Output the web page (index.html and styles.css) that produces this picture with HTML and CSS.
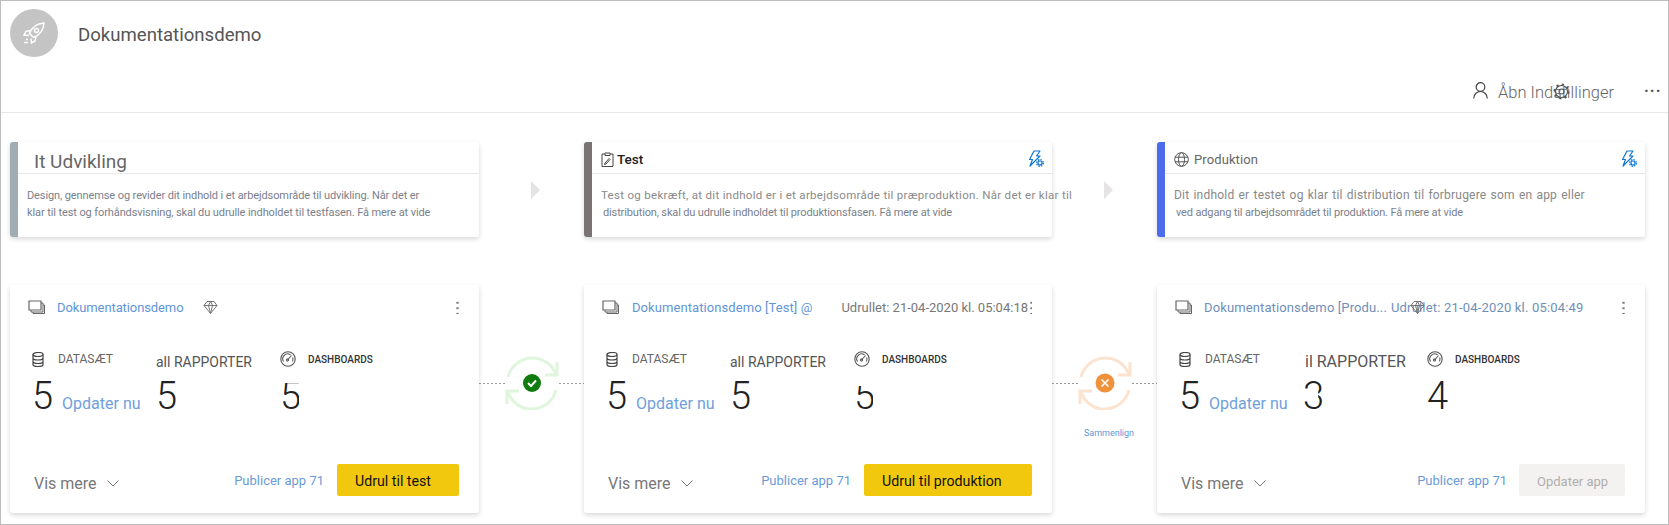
FILE: index.html
```html
<!DOCTYPE html>
<html lang="da">
<head>
    <meta charset="UTF-8">
    <title>Dokumentationsdemo</title>
    <link rel="stylesheet" href="styles.css">
</head>
<body>
    <svg class="sprites" aria-hidden="true">
        <symbol id="i-bolt" viewBox="0 0 16 18">
            <path d="M6 1h6L8.500 6H12L2 16l2.500-6.500H1.500z" fill="none" stroke="currentColor" stroke-width="1.200" stroke-linejoin="round"/>
            <circle cx="12" cy="13" r="2" fill="none" stroke="currentColor" stroke-width="1.200"/>
            <circle cx="12" cy="13" r="3.300" fill="none" stroke="currentColor" stroke-width="1.300" stroke-dasharray="1.500 1.100"/>
        </symbol>
        <symbol id="i-stack" viewBox="0 0 17 14">
            <path d="M1 1h12v9H1z" fill="none" stroke="currentColor" stroke-width="1.200"/>
            <path d="M13 3h2v9H3v-2M15 5h1.500v8.500H5V12" fill="none" stroke="currentColor" stroke-width="1"/>
        </symbol>
        <symbol id="i-db" viewBox="0 0 12 15">
            <ellipse cx="6" cy="2.500" rx="5" ry="2" fill="none" stroke="currentColor" stroke-width="1.200"/>
            <path d="M1 2.500v10c0 1.100 2.200 2 5 2s5-.9 5-2v-10M1 6c0 1.100 2.200 2 5 2s5-.9 5-2M1 9.500c0 1.100 2.200 2 5 2s5-.9 5-2" fill="none" stroke="currentColor" stroke-width="1.200"/>
        </symbol>
        <symbol id="i-gauge" viewBox="0 0 16 16">
            <circle cx="8" cy="8" r="7.200" fill="none" stroke="currentColor" stroke-width="1.100"/>
            <path d="M3.500 10.500A5 5 0 0 1 10.500 3.700" fill="none" stroke="currentColor" stroke-width="1.100"/>
            <path d="M7 9.500L11.500 4.500M12.700 6.500A5 5 0 0 1 12.500 10.500" fill="none" stroke="currentColor" stroke-width="1.100"/>
            <circle cx="7.500" cy="9" r="1.200" fill="none" stroke="currentColor"/>
        </symbol>
        <symbol id="i-diamond" viewBox="0 0 15 15">
            <path d="M4 1.500h7l3 4-6.500 8-6.500-8zM1 5.500h13M5.500 5.500l2 8 2-8L7.500 1.500z" fill="none" stroke="currentColor" stroke-width="1"/>
        </symbol>
        <symbol id="i-chevron" viewBox="0 0 12 7">
            <path d="M.5 .5L6 6l5.500-5.500" fill="none" stroke="currentColor" stroke-width="1"/>
        </symbol>
    </svg>

    <div class="page">
        <header class="top-bar">
            <div class="workspace">
                <div class="avatar">
                    <svg width="24" height="22" viewBox="0 0 24 22" fill="none" stroke="#fff" stroke-width="1.500">
                        <path d="M22 1C15 1.500 10 5 7.500 11.500l4 4C18 13 21.500 8 22 1z"/>
                        <circle cx="14.500" cy="8.500" r="2"/>
                        <path d="M8.500 8.500L4 9.500 2 13l5 .5M14 14.500l-1 4.500-3.500 2-.5-4.500M2 20.500h4M4 17.500h2"/>
                    </svg>
                </div>
                <h1 class="workspace-name">Dokumentationsdemo</h1>
            </div>
            <div class="toolbar">
                <svg class="person" width="15" height="17" viewBox="0 0 15 17" fill="none" stroke="#444" stroke-width="1.200">
                    <circle cx="7.500" cy="5" r="4.300"/>
                    <path d="M.7 16.500c0-4 3-7 6.800-7s6.800 3 6.800 7"/>
                </svg>
                <span class="toolbar-text">Åbn Indstillinger
                    <svg class="gear" width="17" height="17" viewBox="0 0 17 17" fill="none" stroke="#555">
                        <circle cx="8.500" cy="8.500" r="6" stroke-width="1.100"/>
                        <circle cx="8.500" cy="8.500" r="7" stroke-width="2" stroke-dasharray="2.200 3.300"/>
                        <circle cx="8.500" cy="8.500" r="2.500" stroke-width="1.100"/>
                    </svg>
                </span>
                <span class="more">···</span>
            </div>
        </header>

        <main class="pipeline">
            <section class="stage stage-dev">
                <div class="stage-head">
                    <span class="stage-title-big">It Udvikling</span>
                </div>
                <div class="stage-body">
                    <p class="line">Design, gennemse og revider dit indhold i et arbejdsområde til udvikling. Når det er</p>
                    <p class="line">klar til test og forhåndsvisning, skal du udrulle indholdet til testfasen. Få mere at vide</p>
                </div>
            </section>
            <div class="stage-arrow"></div>
            <section class="stage stage-test">
                <div class="stage-head">
                    <svg class="stage-icon" width="13" height="15" viewBox="0 0 13 15" fill="none" stroke="#444">
                        <path d="M4 2H1v12.500h11V2H9M4 1h5v2.500H4zM4 11l-.5 1.500L5 12l4-4.500-1-1z"/>
                    </svg>
                    <span class="stage-title-strong">Test</span>
                    <svg class="bolt"><use href="#i-bolt"/></svg>
                </div>
                <div class="stage-body">
                    <p class="line line-wide">Test og bekræft, at dit indhold er i et arbejdsområde til præproduktion. Når det er klar til</p>
                    <p class="line line-sub">distribution, skal du udrulle indholdet til produktionsfasen. Få mere at vide</p>
                </div>
            </section>
            <div class="stage-arrow"></div>
            <section class="stage stage-prod">
                <div class="stage-head">
                    <svg class="stage-icon" width="15" height="15" viewBox="0 0 15 15" fill="none" stroke="#555">
                        <circle cx="7.500" cy="7.500" r="6.800"/>
                        <ellipse cx="7.500" cy="7.500" rx="3" ry="6.800"/>
                        <path d="M1 5.200h13M1 9.800h13"/>
                    </svg>
                    <span class="stage-title">Produktion</span>
                    <svg class="bolt"><use href="#i-bolt"/></svg>
                </div>
                <div class="stage-body">
                    <p class="line line-spaced">Dit indhold er testet og klar til distribution til forbrugere som en app eller</p>
                    <p class="line line-sub">ved adgang til arbejdsområdet til produktion. Få mere at vide</p>
                </div>
            </section>

            <section class="deploy">
                <div class="deploy-head">
                    <svg class="stack"><use href="#i-stack"/></svg>
                    <a class="deploy-name deploy-name-dev">Dokumentationsdemo</a>
                    <svg class="diamond"><use href="#i-diamond"/></svg>
                    <span class="kebab"></span>
                </div>
                <div class="stats">
                    <div class="stat">
                        <div class="stat-head"><svg class="db"><use href="#i-db"/></svg><span class="stat-label">DATASÆT</span></div>
                        <div class="stat-value"><span class="num">5</span><a class="refresh">Opdater nu</a></div>
                    </div>
                    <div class="stat">
                        <div class="stat-head"><span class="stat-title">all RAPPORTER</span></div>
                        <div class="stat-value"><span class="num num-cut-b">5</span></div>
                    </div>
                    <div class="stat">
                        <div class="stat-head"><svg class="gauge"><use href="#i-gauge"/></svg><span class="stat-strong">DASHBOARDS</span></div>
                        <div class="stat-value"><span class="num num-cut-l">5</span></div>
                    </div>
                </div>
                <div class="deploy-foot">
                    <span class="show-more">Vis mere <svg class="chevron"><use href="#i-chevron"/></svg></span>
                    <a class="publish">Publicer app 71</a>
                    <button class="action">Udrul til test</button>
                </div>
            </section>

            <div class="link">
                <div class="link-row">
                    <span class="dash"></span>
                    <svg class="sync" viewBox="0 0 54 54" fill="none" stroke="#dff6dd" stroke-width="3">
                        <path d="M3 21A25 25 0 0 1 51 19M52 6v13H40M51 34A25 25 0 0 1 3 36M2 48V35h12"/>
                        <circle cx="27" cy="27" r="9" fill="#107c10" stroke="none"/>
                        <path d="M23 27l3 3 5-5.500" stroke="#fff" stroke-width="2"/>
                    </svg>
                    <span class="dash"></span>
                </div>
            </div>

            <section class="deploy">
                <div class="deploy-head">
                    <svg class="stack"><use href="#i-stack"/></svg>
                    <a class="deploy-name deploy-name-test">Dokumentationsdemo [Test] @</a>
                    <span class="deployed deployed-test">Udrullet: 21-04-2020 kl. 05:04:18</span>
                    <span class="kebab kebab-cut"></span>
                </div>
                <div class="stats">
                    <div class="stat">
                        <div class="stat-head"><svg class="db"><use href="#i-db"/></svg><span class="stat-label">DATASÆT</span></div>
                        <div class="stat-value"><span class="num">5</span><a class="refresh">Opdater nu</a></div>
                    </div>
                    <div class="stat">
                        <div class="stat-head"><span class="stat-title">all RAPPORTER</span></div>
                        <div class="stat-value"><span class="num">5</span></div>
                    </div>
                    <div class="stat">
                        <div class="stat-head"><svg class="gauge"><use href="#i-gauge"/></svg><span class="stat-strong">DASHBOARDS</span></div>
                        <div class="stat-value"><span class="num num-cut-t">5</span></div>
                    </div>
                </div>
                <div class="deploy-foot">
                    <span class="show-more">Vis mere <svg class="chevron"><use href="#i-chevron"/></svg></span>
                    <a class="publish">Publicer app 71</a>
                    <button class="action action-wide">Udrul til produktion</button>
                </div>
            </section>

            <div class="link">
                <div class="link-row">
                    <span class="dash"></span>
                    <svg class="sync" viewBox="0 0 54 54" fill="none" stroke="#fce3cf" stroke-width="3">
                        <path d="M3 21A25 25 0 0 1 51 19M52 6v13H40M51 34A25 25 0 0 1 3 36M2 48V35h12"/>
                        <circle cx="27" cy="27" r="9.500" fill="#f0923b" stroke="none"/>
                        <path d="M23.500 23.500l7 7M30.500 23.500l-7 7" stroke="#fff" stroke-width="1.600"/>
                    </svg>
                    <span class="dash"></span>
                </div>
                <a class="compare">Sammenlign</a>
            </div>

            <section class="deploy">
                <div class="deploy-head">
                    <svg class="stack"><use href="#i-stack"/></svg>
                    <a class="deploy-name deploy-name-prod">Dokumentationsdemo [Produ...</a>
                    <span class="deployed deployed-prod">Udrullet: 21-04-2020 kl. 05:04:49
                        <svg class="diamond diamond-over"><use href="#i-diamond"/></svg>
                    </span>
                    <span class="kebab"></span>
                </div>
                <div class="stats">
                    <div class="stat">
                        <div class="stat-head"><svg class="db"><use href="#i-db"/></svg><span class="stat-label">DATASÆT</span></div>
                        <div class="stat-value"><span class="num">5</span><a class="refresh">Opdater nu</a></div>
                    </div>
                    <div class="stat">
                        <div class="stat-head"><span class="stat-title stat-title-prod">il RAPPORTER</span></div>
                        <div class="stat-value"><span class="num num-cut-mid">3</span></div>
                    </div>
                    <div class="stat">
                        <div class="stat-head"><svg class="gauge"><use href="#i-gauge"/></svg><span class="stat-strong">DASHBOARDS</span></div>
                        <div class="stat-value"><span class="num">4</span></div>
                    </div>
                </div>
                <div class="deploy-foot">
                    <span class="show-more">Vis mere <svg class="chevron"><use href="#i-chevron"/></svg></span>
                    <a class="publish publish-prod">Publicer app 71</a>
                    <button class="action action-off">Opdater app</button>
                </div>
            </section>
        </main>
    </div>
</body>
</html>
```

FILE: styles.css
```css
* {
    box-sizing: border-box;
}
body {
    margin: 0;
    font-family: Roboto, "Open Sans", sans-serif;
    background-color: #fff;
    color: #444;
}
p, h1 {
    margin: 0;
}
.sprites {
    display: none;
}
.page {
    width: 1669px;
    height: 525px;
    border: 1px solid #bdbdbd;
    overflow: hidden;
}

/* top bar */
.top-bar {
    height: 112px;
    padding: 8px 9px 0;
    border-bottom: 1px solid #e8e8e8;
}
.workspace {
    display: flex;
    align-items: center;
}
.avatar {
    width: 48px;
    height: 48px;
    border-radius: 50%;
    background-color: #c4c4c4;
    display: flex;
    align-items: center;
    justify-content: center;
}
.workspace-name {
    margin: 4px 0 0 20px;
    font-size: 18.600px;
    font-weight: 400;
    color: #555;
}
.toolbar {
    display: flex;
    justify-content: flex-end;
    align-items: center;
    height: 17px;
    margin-top: 25px;
}
.person {
    margin-right: 10px;
}
.toolbar-text {
    position: relative;
    width: 146px;
    margin-top: 3px;
    font-size: 16.500px;
    font-weight: 300;
    color: #666;
}
.gear {
    position: absolute;
    left: 55px;
    top: 0;
}
.more {
    width: 15px;
    font-size: 16px;
    font-weight: 700;
    letter-spacing: 1px;
    line-height: 17px;
    color: #555;
}

/* stages */
.pipeline {
    display: grid;
    grid-template-columns: 469px 105px 468px 105px 488px;
    grid-template-rows: 95px 228px;
    row-gap: 48px;
    padding: 29px 0 0 9px;
}
.stage {
    border-left: 8px solid #9fadb2;
    border-radius: 3px;
    background-color: #fff;
    box-shadow: 0 2px 5px rgba(0, 0, 0, 0.16);
}
.stage-test {
    border-left-color: #7a7374;
}
.stage-prod {
    border-left-color: #4c6bed;
}
.stage-head {
    height: 32px;
    padding: 3px 8px 0 9px;
    border-bottom: 1px solid #e8e8e8;
    display: flex;
    align-items: center;
}
.stage-title-big {
    margin: 4px 0 0 7px;
    font-size: 19px;
    color: #666;
}
.stage-icon {
    margin-right: 5px;
}
.stage-title-strong {
    margin-left: -2px;
    font-size: 13.500px;
    font-weight: 500;
    color: #222;
}
.stage-title {
    font-size: 13px;
    letter-spacing: 0.1px;
    color: #666;
}
.bolt {
    width: 16px;
    height: 18px;
    margin-left: auto;
    color: #0f78d4;
}
.stage-body {
    padding: 13px 9px 0;
}
.line {
    font-size: 11px;
    letter-spacing: -0.1px;
    line-height: 17px;
    white-space: nowrap;
    color: #7a7f8c;
}
.line-wide {
    font-size: 11.500px;
    letter-spacing: 0.3px;
    color: #8a8a8a;
}
.line-spaced {
    font-size: 12px;
    word-spacing: 1px;
    letter-spacing: 0.2px;
    color: #888;
}
.line-sub {
    margin-left: 2px;
    letter-spacing: -0.14px;
}
.stage-arrow {
    align-self: center;
    margin-left: 52px;
    width: 0;
    height: 0;
    border-top: 9px solid transparent;
    border-bottom: 9px solid transparent;
    border-left: 9px solid #e5e3e3;
}

/* deployment cards */
.deploy {
    display: flex;
    flex-direction: column;
    padding: 14px 20px 17px 0;
    border-radius: 3px;
    background-color: #fff;
    box-shadow: 0 2px 5px rgba(0, 0, 0, 0.16);
}
.deploy-head {
    display: flex;
    align-items: center;
    height: 16px;
    padding-left: 18px;
}
.stack {
    width: 17px;
    height: 14px;
    color: #666;
}
.deploy-name {
    margin-left: 12px;
    font-size: 13px;
    white-space: nowrap;
    color: #5f96d8;
}
.deploy-name-dev {
    letter-spacing: -0.1px;
}
.deploy-name-test {
    margin-left: 13px;
    letter-spacing: 0.08px;
}
.deploy-name-prod {
    letter-spacing: 0.12px;
    color: #6f8fb8;
}
.diamond {
    width: 15px;
    height: 15px;
    margin-left: 20px;
    color: #777;
}
.deployed {
    position: relative;
    font-size: 13px;
    white-space: nowrap;
    color: #777;
}
.deployed-test {
    margin-left: 29px;
}
.deployed-prod {
    margin-left: 4px;
    letter-spacing: 0.18px;
    color: #6f8fb8;
}
.diamond-over {
    position: absolute;
    left: 19px;
    top: 0;
    margin-left: 0;
}
.kebab {
    width: 3px;
    height: 14px;
    margin-left: auto;
    background-image: radial-gradient(circle, #777 1px, transparent 1.300px);
    background-size: 3px 5.500px;
}
.kebab-cut {
    width: 2px;
}
.stats {
    display: grid;
    grid-template-columns: repeat(3, 124px);
    margin-top: 36px;
    padding-left: 22px;
}
.stat-head {
    display: flex;
    align-items: center;
    height: 16px;
}
.db {
    width: 12px;
    height: 15px;
    color: #444;
}
.gauge {
    width: 16px;
    height: 16px;
    color: #555;
}
.stat-label {
    margin-left: 14px;
    font-size: 12px;
    color: #666;
}
.stat-title {
    margin-top: 5px;
    font-size: 14px;
    white-space: nowrap;
    color: #555;
}
.stat-title-prod {
    margin-left: 2px;
    font-size: 16px;
}
.stat-strong {
    margin-left: 12px;
    font-size: 10px;
    font-weight: 500;
    color: #333;
}
.stat-value {
    display: flex;
    margin-top: 10px;
    white-space: nowrap;
}
.num {
    font-size: 38px;
    font-weight: 300;
    line-height: 38px;
    color: #222;
}
.num-cut-b {
    clip-path: inset(0 0 3px 0);
}
.num-cut-l {
    clip-path: inset(6px 2px 3px 2px);
}
.num-cut-t {
    clip-path: inset(9px 2px 2px 2px);
}
.num-cut-mid {
    clip-path: polygon(0 0, 100% 0, 100% 88%, 0 88%, 0 64%, 72% 64%, 72% 36%, 0 36%);
}
.refresh {
    margin: 17px 0 0 9px;
    font-size: 16px;
    color: #6fa0dc;
}
.deploy-foot {
    display: flex;
    align-items: center;
    height: 32px;
    margin-top: auto;
    padding-left: 24px;
}
.show-more {
    display: flex;
    align-items: center;
    margin-top: 6px;
    font-size: 16px;
    color: #777;
}
.chevron {
    width: 12px;
    height: 7px;
    margin-left: 10px;
}
.publish {
    margin: 0 13px 0 auto;
    font-size: 13px;
    color: #6a9bd8;
}
.publish-prod {
    margin-right: 12px;
}
.action {
    width: 122px;
    height: 32px;
    padding: 2px 0 0 18px;
    border: none;
    border-radius: 2px;
    background-color: #f2c80f;
    font-family: inherit;
    font-size: 14.200px;
    text-align: left;
    color: #111;
}
.action-wide {
    width: 168px;
}
.action-off {
    width: 106px;
    background-color: #f3f2f1;
    font-size: 13px;
    color: #b0aeac;
}

/* links between the cards */
.link {
    display: flex;
    flex-direction: column;
    align-items: center;
    padding-top: 71px;
}
.link-row {
    display: flex;
    align-items: center;
    width: 100%;
}
.sync {
    width: 54px;
    height: 54px;
    flex: none;
}
.dash {
    flex: 1;
    height: 1px;
    background-image: repeating-linear-gradient(to right, #999 0 2px, transparent 2px 4px);
}
.compare {
    margin: 18px 0 0 9px;
    font-size: 9px;
    color: #5f96d8;
}
```
